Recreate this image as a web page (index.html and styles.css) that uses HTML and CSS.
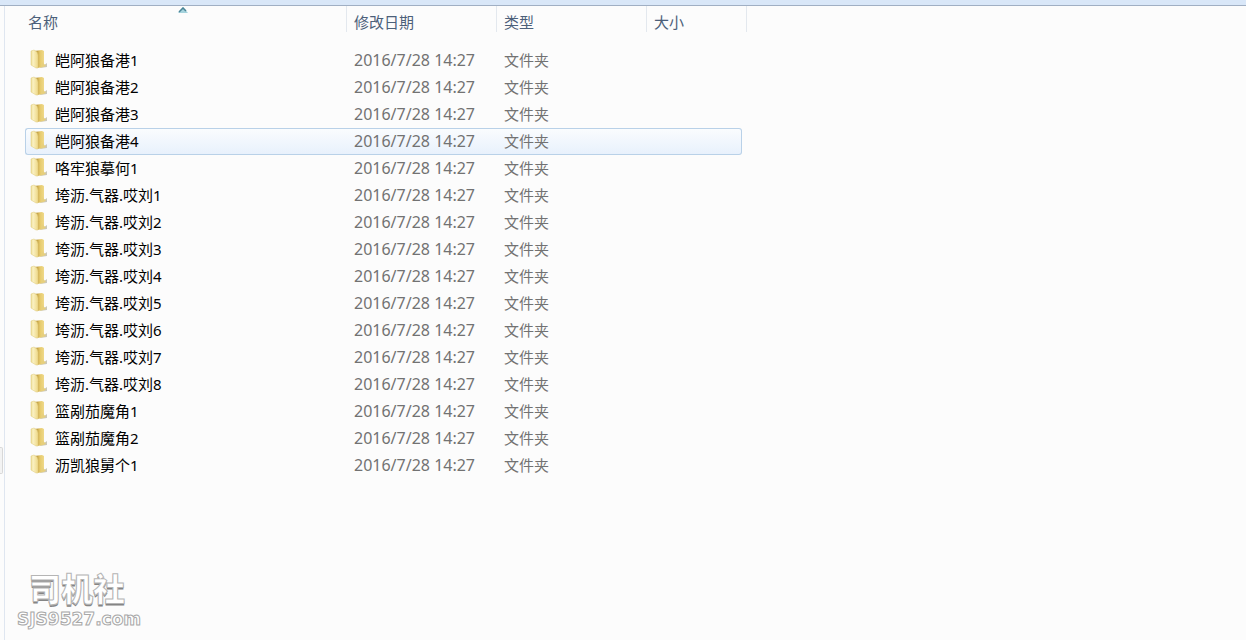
FILE: index.html
```html
<!DOCTYPE html>
<html lang="zh-CN">
<head>
    <meta charset="UTF-8">
    <meta name="viewport" content="width=device-width, initial-scale=1.0">
    <title>文件夹</title>
    <link rel="stylesheet" href="styles.css">
</head>
<body>
    <div class="barra"></div>
    <div class="janela">
        <div class="divisor"><span class="alca"></span></div>
        <main class="conteudo">
            <table class="lista">
                <colgroup>
                    <col class="colNome">
                    <col class="colData">
                    <col class="colTipo">
                    <col class="colTam">
                    <col class="colFim">
                </colgroup>
                <thead>
                    <tr>
                        <th class="ordenada"><button>名称</button>
                            <svg class="seta" width="10" height="6" viewBox="0 0 10 6"><path d="M0 6L5 0L10 6Z" fill="#a5d3dd"/><path d="M1 5L5 1L8 4" fill="none" stroke="#4b8496" stroke-width="1.500"/></svg>
                        </th>
                        <th><button>修改日期</button></th>
                        <th><button>类型</button></th>
                        <th colspan="2"><button>大小</button></th>
                    </tr>
                </thead>
                <tbody id="linhas"></tbody>
            </table>
        </main>
    </div>

    <div class="marca">
        <p class="marcaNome">司机社</p>
        <p class="marcaSite">SJS9527.com</p>
    </div>

    <svg width="0" height="0" class="defs">
        <defs>
            <linearGradient id="frente" x1="0" x2="1" y1="0" y2="0">
                <stop offset="0" stop-color="#eddc94"/>
                <stop offset=".3" stop-color="#faf1c2"/>
                <stop offset="1" stop-color="#eed888"/>
            </linearGradient>
            <linearGradient id="fundo" x1="0" x2="1" y1="0" y2="0">
                <stop offset=".3" stop-color="#c09d40"/>
                <stop offset=".6" stop-color="#e6ca6c"/>
                <stop offset="1" stop-color="#efd98a"/>
            </linearGradient>
            <symbol id="pasta" viewBox="0 0 18 20">
                <path d="M11 17C14 17 15 15 17 14L17 18L10 19Z" fill="#cbc8ba"/>
                <path d="M4 2L12 1L14 2L14 18L7 19Z" fill="url(#fundo)"/>
                <path d="M13 12C13 15 14 15 16 16C15 18 13 18 11 18Z" fill="#e6cf7e"/>
                <path d="M1 2L4 1L7 3L8 6L8 19L6 19L1 16Z" fill="url(#frente)" stroke="#dfca7c" stroke-width=".5"/>
            </symbol>
        </defs>
    </svg>

    <script>
        var nomes = [
            '皑阿狼备港1', '皑阿狼备港2', '皑阿狼备港3', '皑阿狼备港4',
            '咯牢狼摹何1',
            '垮沥.气器.哎刘1', '垮沥.气器.哎刘2', '垮沥.气器.哎刘3', '垮沥.气器.哎刘4',
            '垮沥.气器.哎刘5', '垮沥.气器.哎刘6', '垮沥.气器.哎刘7', '垮沥.气器.哎刘8',
            '篮剐茄魔角1', '篮剐茄魔角2',
            '沥凯狼舅个1'
        ];
        var html = '';
        for(var c = 0; c < nomes.length; c++){
            html += `<tr${c == 3 ? ' class="ativa"' : ''}>
                <td class="nome"><div class="item"><svg class="icone"><use href="#pasta"/></svg><span>${nomes[c]}</span></div></td>
                <td class="data">2016/7/28 14:27</td>
                <td>文件夹</td>
                <td></td>
            </tr>`;
        }
        document.querySelector('#linhas').innerHTML = html;
    </script>
</body>
</html>
```
FILE: styles.css
```css
@charset "utf-8";

*{
    box-sizing: border-box;
    padding: 0px;
    margin: 0px;
}
body{
    display: flex;
    flex-direction: column;
    min-height: 100vh;
    background-color: #fcfcfc;
    font: normal 15px "Noto Sans", "Noto Sans CJK SC", sans-serif;
    color: #727272;
}
.barra{
    height: 6px;
    background-color: #d9e7f8;
    border-bottom: 1px solid #a0afc3;
}
.janela{
    display: flex;
    flex: 1;
}
.divisor{
    display: flex;
    align-items: flex-end;
    width: 5px;
    padding-bottom: 166px;
    border-right: 1px solid #dfe6f0;
}
.alca{
    width: 3px;
    height: 27px;
    background-color: #f3f3f3;
    border: 1px solid #d8d8d8;
    border-left: none;
    border-radius: 0px 2px 2px 0px;
}
.conteudo{
    flex: 1;
    padding-left: 20px;
}
.lista{
    width: 722px;
    table-layout: fixed;
    border-collapse: separate;
    border-spacing: 0px;
}
.colNome{
    width: 322px;
}
.colData, .colTipo{
    width: 150px;
}
.colTam{
    width: 95px;
}
.colFim{
    width: 5px;
}
th{
    position: relative;
    height: 25px;
    text-align: left;
    border-right: 1px solid #e3e8ee;
}
th button{
    width: 100%;
    padding: 6px 0px 0px 7px;
    text-align: left;
    font: inherit;
    font-weight: 400;
    line-height: 20px;
    color: #4c607a;
    background: none;
    border: none;
}
.ordenada button{
    padding-left: 3px;
}
.seta{
    position: absolute;
    top: 1px;
    left: 153px;
}
tbody::before{
    content: "";
    display: block;
    height: 15px;
}
td{
    height: 27px;
    padding-left: 7px;
    line-height: 25px;
    white-space: nowrap;
    border: 0px solid #b9d1e8;
}
.nome{
    padding-left: 5px;
    color: #000;
}
.item{
    display: flex;
    align-items: flex-start;
    gap: 7px;
}
.data{
    font-size: 16px;
}
.icone{
    width: 18px;
    height: 20px;
    margin-top: 1px;
}
.ativa td{
    background: linear-gradient(#fafcfe, #e8f1fc);
    border-width: 1px 0px;
}
.ativa td:first-child{
    padding-left: 4px;
    border-left-width: 1px;
    border-radius: 3px 0px 0px 3px;
}
.ativa td:last-child{
    border-right-width: 1px;
    border-radius: 0px 3px 3px 0px;
}
.marca{
    display: flex;
    flex-direction: column;
    gap: 4px;
    position: absolute;
    left: 17px;
    bottom: 11px;
    color: #fff;
}
.marcaNome{
    padding-left: 12px;
    font: 900 32px "Noto Sans CJK SC", sans-serif;
    line-height: 36px;
    -webkit-text-stroke: 1px #b5b5b5;
    text-shadow: 0px 2px 0px #858585;
}
.marcaSite{
    font: 700 17px "DejaVu Sans", sans-serif;
    line-height: 20px;
    -webkit-text-stroke: 1px #a8a8a8;
}
.defs{
    position: absolute;
}
```
